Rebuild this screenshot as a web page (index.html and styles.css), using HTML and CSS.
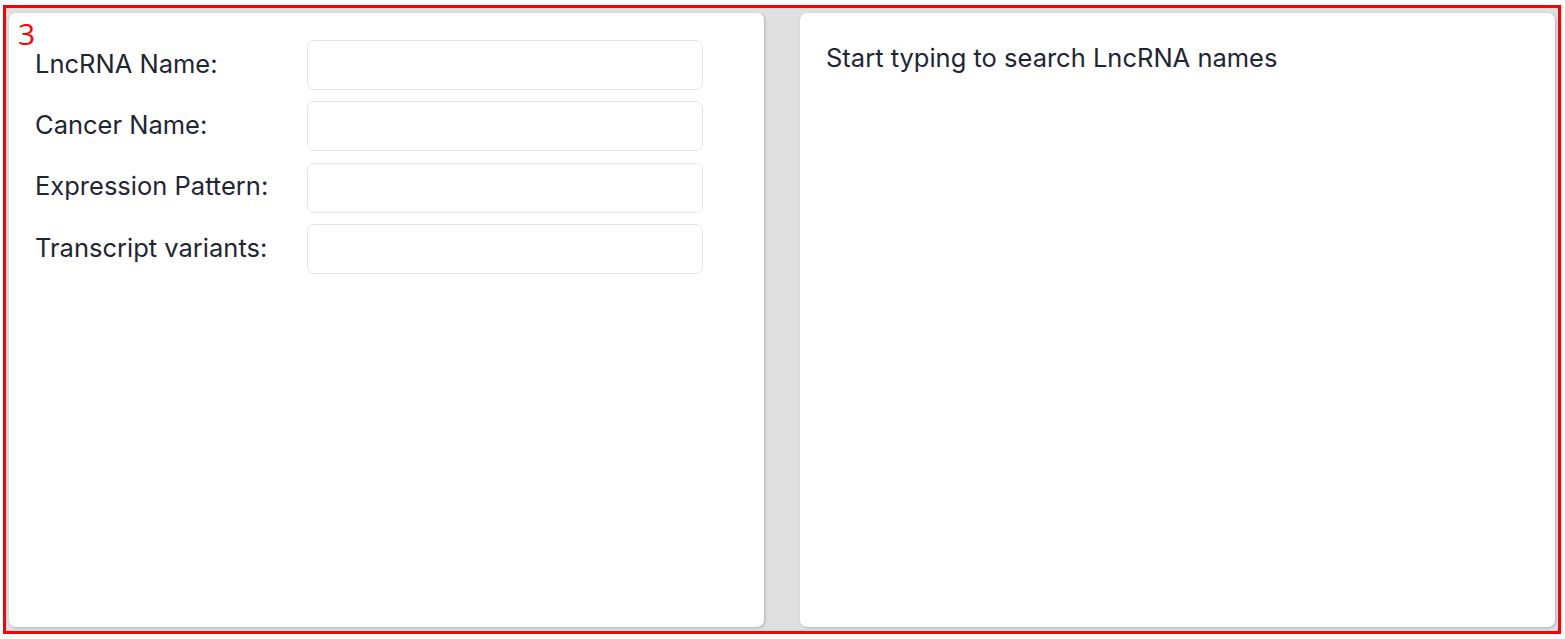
FILE: index.html
```html
<!DOCTYPE html>
<html>
<head>
<meta charset="utf-8">
<link rel="stylesheet" href="styles.css">
</head>
<body>
<div class="frame">
  <span class="tag">3</span>
  <section class="card form-card">
    <div class="form-grid">
      <label class="label">LncRNA Name:</label>
      <input class="field" type="text">
      <label class="label">Cancer Name:</label>
      <input class="field" type="text">
      <label class="label">Expression Pattern:</label>
      <input class="field" type="text">
      <label class="label">Transcript variants:</label>
      <input class="field" type="text">
    </div>
  </section>
  <section class="card result-card">
    <p class="hint">Start typing to search LncRNA names</p>
  </section>
</div>
</body>
</html>
```
FILE: styles.css
```css
html, body {
  margin: 0;
  padding: 0;
  background: #ffffff;
}
body {
  padding: 5px 0 0 3px;
  font-family: Inter, "Noto Sans", sans-serif;
  color: #1f2633;
}
.frame {
  position: relative;
  box-sizing: border-box;
  width: 1558px;
  height: 629px;
  border: 3px solid #ff0000;
  background: #e0e0e0;
  display: flex;
  gap: 36px;
  padding: 5px 3px 4px 3px;
}
.tag {
  position: absolute;
  left: 12px;
  top: 11px;
  color: #ff0000;
  font-family: "Open Sans", sans-serif;
  font-size: 30px;
  line-height: 1;
  z-index: 2;
}
.card {
  flex: 1;
  background: #ffffff;
  border-radius: 7px;
  box-shadow: 1px 1px 3px rgba(0, 0, 0, 0.22);
}
.form-card {
  padding: 27px 26px;
}
.form-grid {
  display: grid;
  grid-template-columns: 272px 396px;
  grid-auto-rows: 50px;
  row-gap: 11.3px;
  align-items: center;
}
.label {
  font-size: 25.5px;
  line-height: 1;
  padding-bottom: 3px;
}
.field {
  box-sizing: border-box;
  height: 50px;
  width: 396px;
  border: 1px solid #e3e5ea;
  border-radius: 7px;
  background: #ffffff;
  margin: 0;
}
.result-card {
  padding: 0 26px;
}
.hint {
  margin: 32px 0 0;
  font-size: 25.5px;
  line-height: 1;
}
```
